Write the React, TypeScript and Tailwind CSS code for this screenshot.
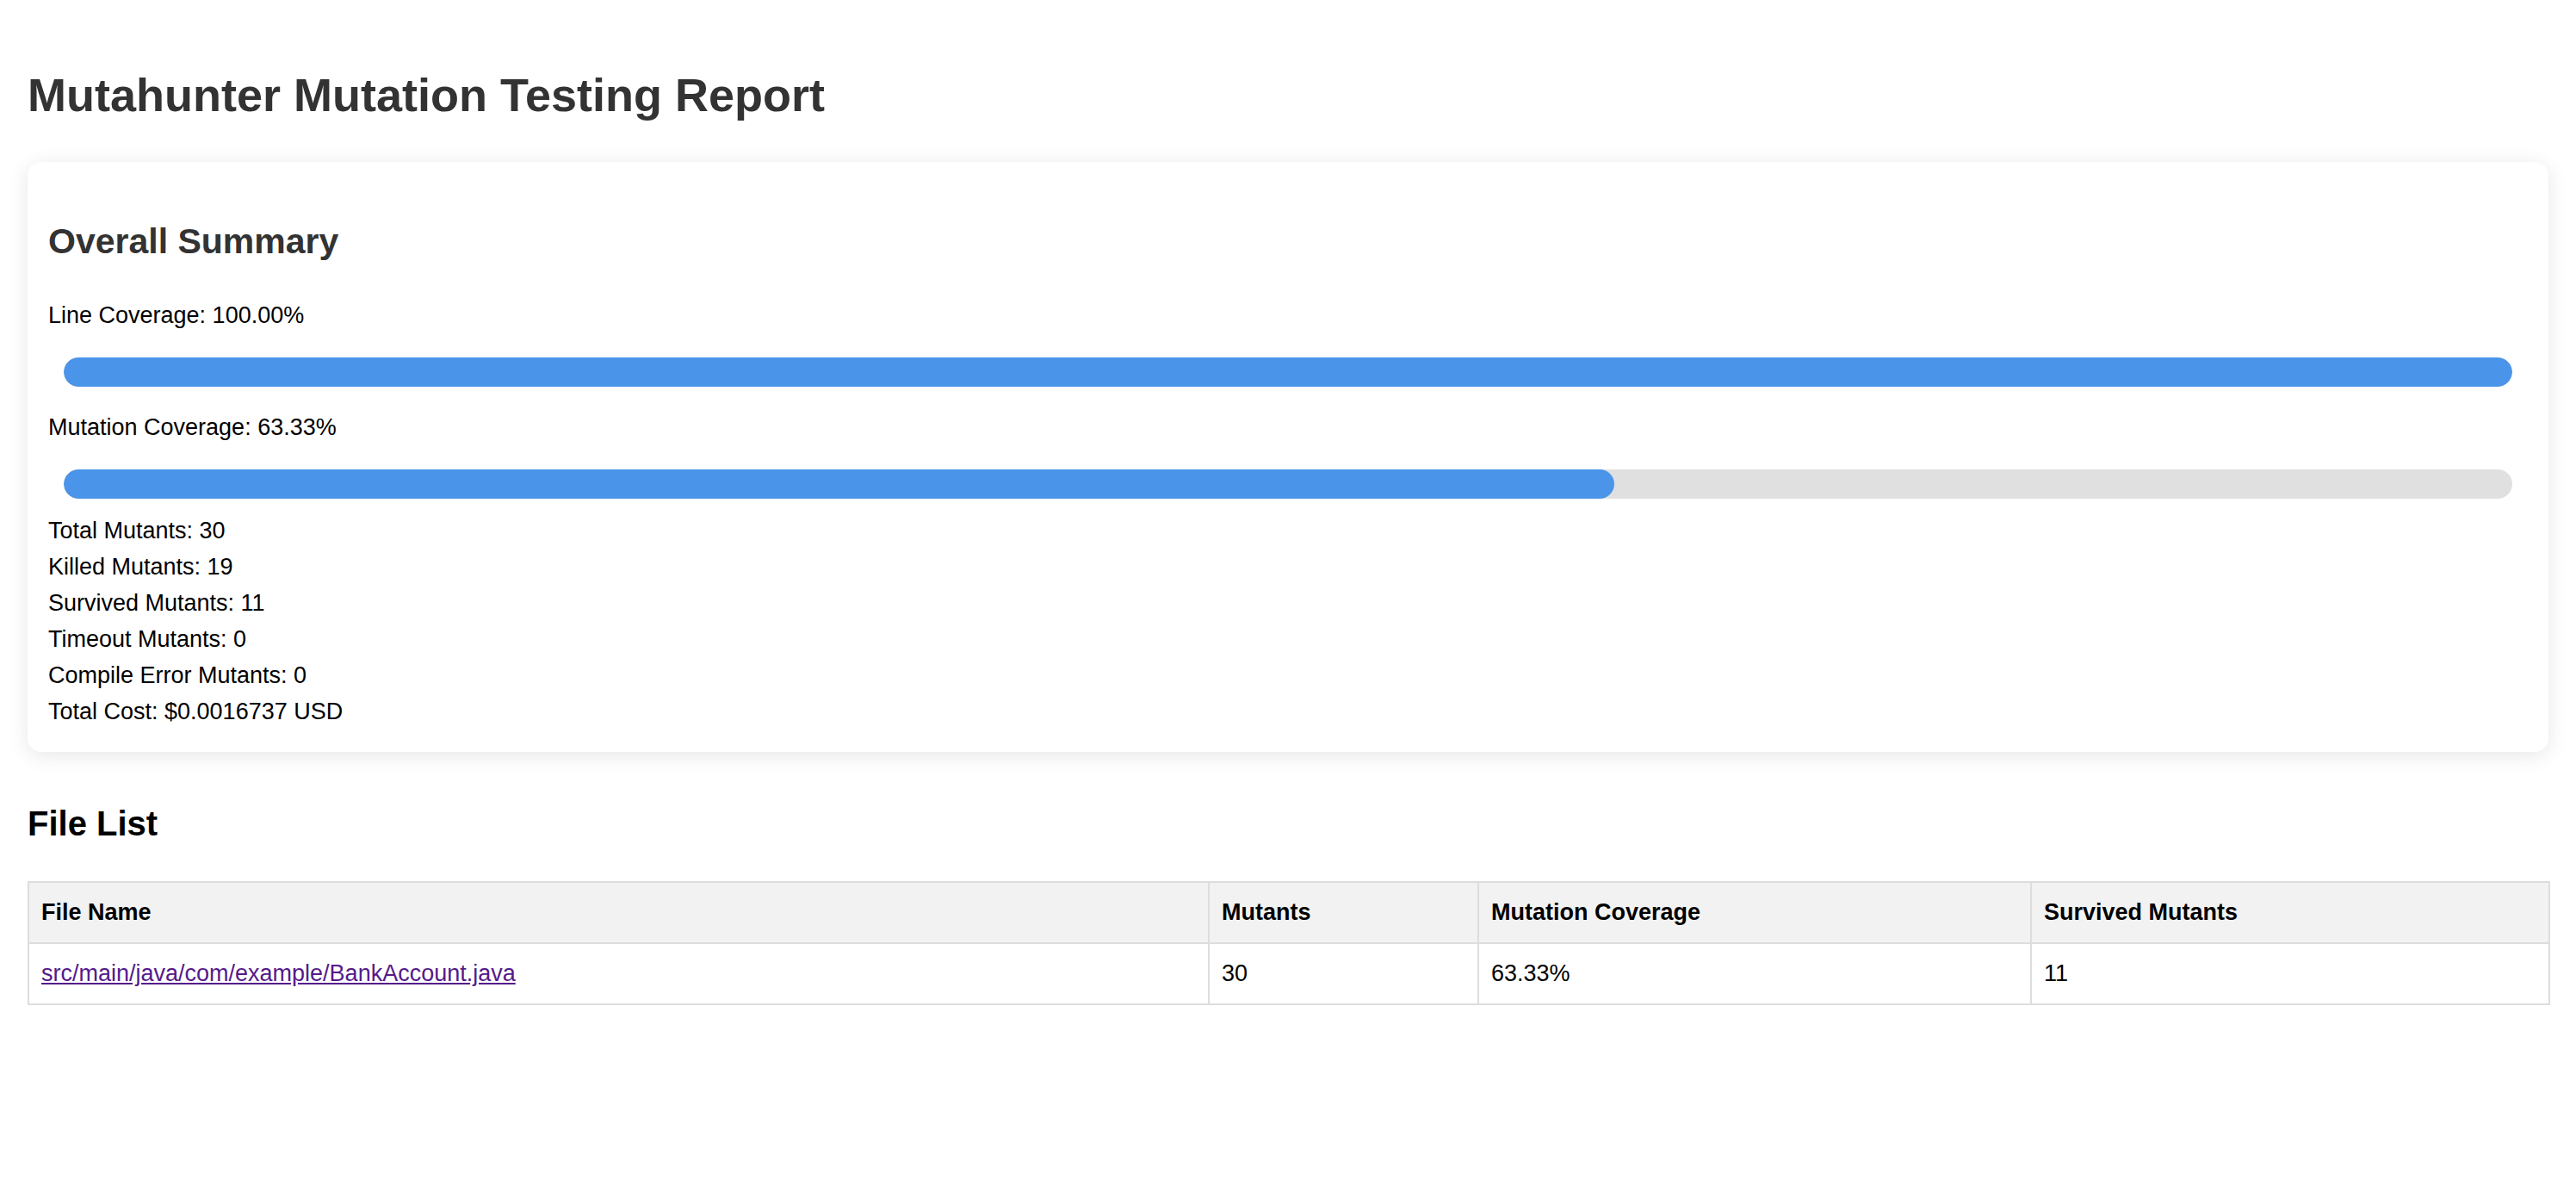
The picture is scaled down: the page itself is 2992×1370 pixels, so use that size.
const summary = [
  'Total Mutants: 30',
  'Killed Mutants: 19',
  'Survived Mutants: 11',
  'Timeout Mutants: 0',
  'Compile Error Mutants: 0',
  'Total Cost: $0.0016737 USD'
];

const ProgressBar = ({ value }: { value: number }) => (
  <div className="mx-[18px] h-[34px] rounded-full bg-[#e0e0e0] overflow-hidden">
    <div className="h-full rounded-full bg-[#4a95e9]" style={{ width: `${value}%` }} />
  </div>
);

const App = () => {
  return (
    <div
      className="min-h-screen bg-white px-8 pt-[78px] pb-16 text-black"
      style={{ fontFamily: '"Liberation Sans", Arial, Helvetica, sans-serif' }}
    >
      <h1 className="text-[54px] leading-[64px] font-bold text-[#333]">
        Mutahunter Mutation Testing Report
      </h1>

      <div className="mt-[46px] rounded-[16px] bg-white px-6 pt-6 pb-[26px] shadow-[0_4px_24px_rgba(0,0,0,0.1)]">
        <h2 className="mt-[44px] text-[41px] leading-[48px] font-bold text-[#333]">Overall Summary</h2>

        <p className="mt-[41px] text-[27px] leading-[42px]">Line Coverage: 100.00%</p>
        <div className="mt-[28px]">
          <ProgressBar value={100} />
        </div>

        <p className="mt-[26px] text-[27px] leading-[42px]">Mutation Coverage: 63.33%</p>
        <div className="mt-[28px]">
          <ProgressBar value={63.33} />
        </div>

        <div className="mt-4 text-[27px] leading-[42px]">
          {summary.map((line) => (
            <p key={line}>{line}</p>
          ))}
        </div>
      </div>

      <h2 className="mt-[59px] text-[40px] leading-[48px] font-bold">File List</h2>

      <table className="mt-[43px] w-full table-fixed border-collapse border-2 border-[#ddd] text-[27px] leading-[41px]">
        <thead>
          <tr className="bg-[#f2f2f2]">
            <th className="w-[1371px] border-2 border-[#ddd] px-[14px] py-[14px] text-left font-bold">File Name</th>
            <th className="w-[313px] border-2 border-[#ddd] px-[14px] py-[14px] text-left font-bold">Mutants</th>
            <th className="w-[642px] border-2 border-[#ddd] px-[14px] py-[14px] text-left font-bold">Mutation Coverage</th>
            <th className="w-[602px] border-2 border-[#ddd] px-[14px] py-[14px] text-left font-bold">Survived Mutants</th>
          </tr>
        </thead>
        <tbody>
          <tr>
            <td className="border-2 border-[#ddd] px-[14px] py-[14px]">
              <a href="#" className="text-[#551a8b] underline">
                src/main/java/com/example/BankAccount.java
              </a>
            </td>
            <td className="border-2 border-[#ddd] px-[14px] py-[14px]">30</td>
            <td className="border-2 border-[#ddd] px-[14px] py-[14px]">63.33%</td>
            <td className="border-2 border-[#ddd] px-[14px] py-[14px]">11</td>
          </tr>
        </tbody>
      </table>
    </div>
  );
};

export default App;
